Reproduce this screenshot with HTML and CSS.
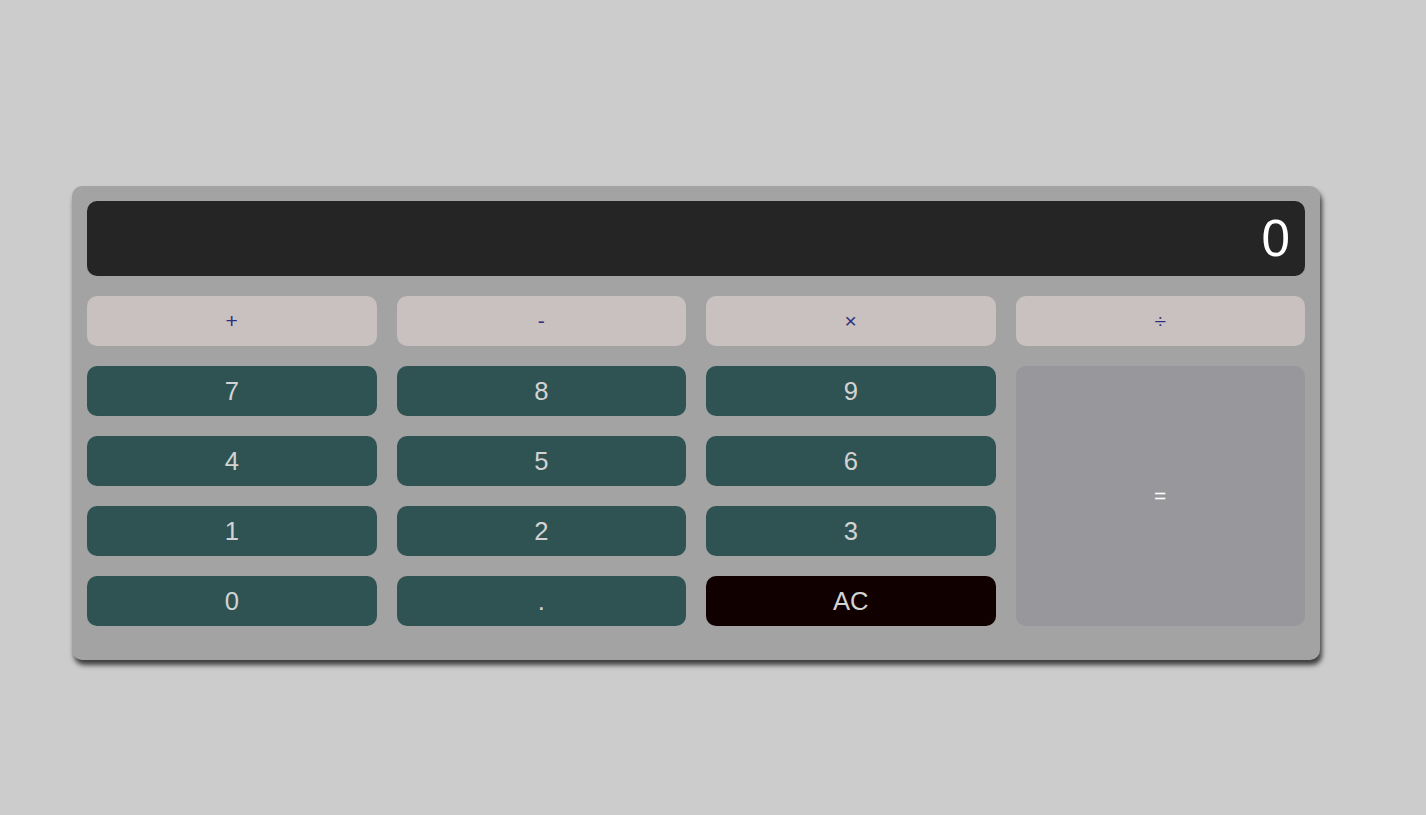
FILE: index.html
```html
<!DOCTYPE html>
<html lang="en">
<head>
<meta charset="utf-8">
<title>Calculator</title>
<link rel="stylesheet" href="styles.css">
</head>
<body>
<div class="calculator">
  <div class="display">0</div>
  <div class="keys">
    <button class="key op">+</button>
    <button class="key op">-</button>
    <button class="key op">×</button>
    <button class="key op">÷</button>
    <button class="key num">7</button>
    <button class="key num">8</button>
    <button class="key num">9</button>
    <button class="key equals">=</button>
    <button class="key num">4</button>
    <button class="key num">5</button>
    <button class="key num">6</button>
    <button class="key num">1</button>
    <button class="key num">2</button>
    <button class="key num">3</button>
    <button class="key num">0</button>
    <button class="key num">.</button>
    <button class="key clear">AC</button>
  </div>
</div>
</body>
</html>
```
FILE: styles.css
```css
html, body {
  margin: 0;
  padding: 0;
}
body {
  background: #cccccc;
  font-family: "Liberation Sans", Arial, sans-serif;
  padding: 186px 0 0 72px;
  box-sizing: border-box;
  height: 100vh;
}
.calculator {
  width: 1218px;
  background: #a3a3a3;
  border-radius: 10px;
  padding: 15px 15px 34px 15px;
  box-shadow: 2px 5px 5px rgba(0, 0, 0, 0.7);
}
.display {
  height: 75px;
  box-sizing: border-box;
  background: #252525;
  border-radius: 10px;
  color: #ffffff;
  font-size: 51.2px;
  line-height: 75px;
  text-align: right;
  padding-right: 15px;
}
.keys {
  margin-top: 20px;
  display: grid;
  grid-template-columns: repeat(4, 1fr);
  grid-auto-rows: 50px;
  gap: 20px;
}
.key {
  border: none;
  border-radius: 10px;
  font-family: "Liberation Sans", Arial, sans-serif;
  font-size: 25.6px;
  padding: 0;
  margin: 0;
  cursor: pointer;
}
.op {
  background: #c9c1c0;
  color: #2d2f80;
  font-size: 21px;
}
.num {
  background: #2f5353;
  color: #d3d3d3;
}
.clear {
  background: #100000;
  color: #d3d3d3;
}
.equals {
  grid-column: 4;
  grid-row: 2 / span 4;
  background: #98979b;
  color: #ffffff;
  font-size: 21px;
}
```
